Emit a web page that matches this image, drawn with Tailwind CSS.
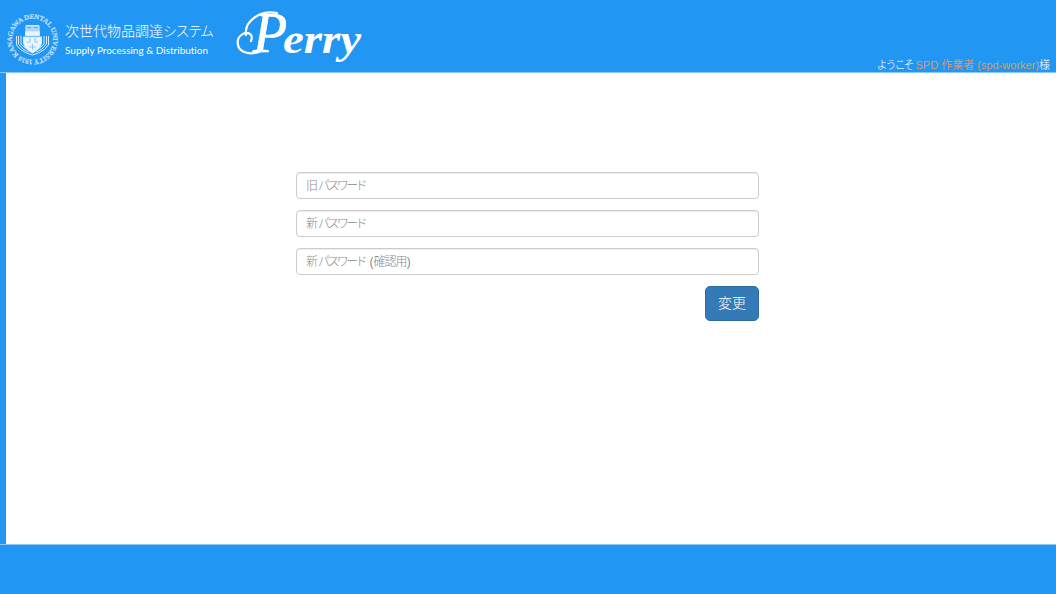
<!DOCTYPE html>
<html lang="ja">
<head>
<meta charset="utf-8">
<title>Perry</title>
<script src="https://cdn.jsdelivr.net/npm/@tailwindcss/browser@4"></script>
</head>
<body class="h-[594px] w-[1056px] overflow-hidden bg-white font-['Liberation_Sans','Noto_Sans_CJK_JP',sans-serif] flex flex-col">
<header class="h-[73px] shrink-0 bg-[#2196f3] border-b border-[#8ac9f5] flex text-white">
  <svg class="ml-[6px] mt-[13px] size-[53px] shrink-0" viewBox="0 0 53 53" fill="none">
    <defs>
      <path id="ring" d="M26.500 47A20.500 20.500 0 0 1 26.500 6A20.500 20.500 0 0 1 26.500 47"/>
    </defs>
    <g fill="#b9defb" stroke="#b9defb" stroke-width=".25" font-family="Liberation Serif" font-weight="bold" font-size="7">
      <text textLength="127"><textPath href="#ring">1910 KANAGAWA DENTAL UNIVERSITY</textPath></text>
    </g>
    <g stroke="#d4ebfd" stroke-width="1">
      <path d="M20 12.500h13v9H20z" fill="#a9d5fa"/>
      <path d="M21 14.500h4m3 0h4" stroke="#54aef6"/>
      <path d="M19.500 18.500h14v4h-14z" fill="#e8f5fe"/>
      <path d="M10.500 23v9q3 5 10 8l6 2 6-2q7-3 10-8V23M12.500 23v8q4 6 10 8M40.500 23v8q-4 6-10 8M15 23v8q3 4 7 5M38 23v8q-3 4-7 5"/>
      <path d="M17.500 24h18v6q-1 6-9 10-8-4-9-10z" fill="#e8f5fe"/>
      <path d="M24 25v4h-3m8-4v4h3M26.500 31v6M23 34h7" stroke="#8cc8f9"/>
    </g>
  </svg>
  <div class="ml-[6px] w-[160px] pt-[21px] whitespace-nowrap">
    <div class="text-[14px] leading-[20px] font-light">次世代物品調達<span class="tracking-[-1.5px]">システム</span></div>
    <svg class="mt-[1px] block overflow-visible [font-variant-ligatures:none]" width="150" height="16"><text x="0" y="12" fill="white" font-family="Lato, Liberation Sans" font-size="10" textLength="143" lengthAdjust="spacingAndGlyphs">Supply Processing &amp; Distribution</text></svg>
  </div>
  <svg class="ml-[10px] mt-[5px] h-[64px] w-[130px] overflow-visible" viewBox="0 0 130 64" fill="white">
    <text x="18" y="47" font-family="Liberation Serif" font-style="italic" font-size="56" stroke="white" stroke-width=".7">P</text>
    <text x="48" y="48" font-family="Liberation Serif" font-style="italic" font-size="43" font-weight="bold" textLength="78" lengthAdjust="spacingAndGlyphs">erry</text>
    <path d="M26 46C15 51 4 47 3 40C1 31 10 26 15 29Q18 31 16 36M11 30C9 16 25 5 42 8" fill="none" stroke="white" stroke-width="2.200" stroke-linecap="round"/>
  </svg>
  <div class="ml-auto mr-[6px] mt-[57px] text-[11px] leading-[16px] whitespace-nowrap"><span class="tracking-[-2px] font-light">ようこそ</span> <span class="text-[#d99a62]">SPD 作業者 <span>(spd-worker)</span></span><span class="font-light">様</span></div>
</header>
<div class="h-[471px] shrink-0 flex">
  <aside class="w-[6px] bg-[#2196f3]"></aside>
  <main class="flex-1 pt-[99px]">
    <form class="ml-[290px] w-[463px] flex flex-col gap-[11px] text-[12px] text-[#888] font-light whitespace-nowrap">
      <div class="h-[27px] rounded-[4px] border border-[#ccc] pl-[9px] pt-[1px] leading-[25px] shadow-[inset_0_1px_1px_rgba(0,0,0,0.07)]">旧<span class="tracking-[-2.6px]">パスワード</span></div>
      <div class="h-[27px] rounded-[4px] border border-[#ccc] pl-[9px] pt-[1px] leading-[25px] shadow-[inset_0_1px_1px_rgba(0,0,0,0.07)]">新<span class="tracking-[-2.6px]">パスワード</span></div>
      <div class="h-[27px] rounded-[4px] border border-[#ccc] pl-[9px] pt-[1px] leading-[25px] shadow-[inset_0_1px_1px_rgba(0,0,0,0.07)]">新<span class="tracking-[-2.6px]">パスワード</span> <span class="ml-[1px]">(</span><span class="tracking-[-0.9px]">確認用</span>)</div>
      <button type="button" class="self-end h-[35px] w-[54px] rounded-[5px] border border-[#2e6da4] bg-[#337ab7] text-white text-[14px] font-light">変更</button>
    </form>
  </main>
</div>
<footer class="flex-1 bg-[#2196f3] border-t border-[#8ac9f5]"></footer>
</body>
</html>
